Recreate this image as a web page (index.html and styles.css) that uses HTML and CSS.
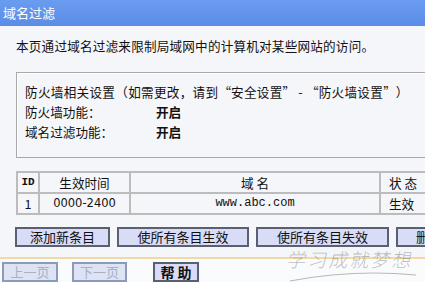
FILE: index.html
```html
<!DOCTYPE html>
<html>
<head>
<meta charset="utf-8">
<link rel="stylesheet" href="styles.css">
</head>
<body>
<div class="page">
  <div class="titlebar">域名过滤</div>
  <div class="intro">本页通过域名过滤来限制局域网中的计算机对某些网站的访问。</div>
  <div class="box">
    <div class="line wide">防火墙相关设置（如需更改，请到<span class="q">“</span>安全设置<span class="q">”</span> - <span class="q">“</span>防火墙设置<span class="q">”</span>）</div>
    <div class="line row"><span class="label">防火墙功能：</span><b class="val">开启</b></div>
    <div class="line row"><span class="label">域名过滤功能：</span><b class="val">开启</b></div>
  </div>
  <table class="list">
    <tr class="head">
      <td class="c-id mono">ID</td>
      <td class="c-time">生效时间</td>
      <td class="c-dom">域 名</td>
      <td class="c-st">状 态</td>
    </tr>
    <tr>
      <td class="c-id">1</td>
      <td class="c-time num">0000-2400</td>
      <td class="c-dom mono">www.abc.com</td>
      <td class="c-st">生效</td>
    </tr>
  </table>
  <div class="actions">
    <button class="btn w1">添加新条目</button>
    <button class="btn w2">使所有条目生效</button>
    <button class="btn w3">使所有条目失效</button>
    <button class="btn w4">删除所有条目</button>
  </div>
  <div class="footer">
    <button class="btn nav disabled">上一页</button>
    <button class="btn nav disabled">下一页</button>
    <button class="btn help">帮 助</button>
    <div class="mark">
      <span class="mark-text">学习成就梦想</span>
      <svg class="mark-curve" width="130" height="14" viewBox="0 0 130 14"><path d="M2 12 Q65 0 128 6" fill="none" stroke="#b8b8b8" stroke-width="1.2"/></svg>
    </div>
  </div>
</div>
</body>
</html>
```
FILE: styles.css
```css
html, body {
  margin: 0;
  padding: 0;
}
body {
  width: 425px;
  height: 282px;
  overflow: hidden;
  background: #f5f6f9;
  font-family: "Noto Sans CJK SC", "Noto Sans", sans-serif;
  font-size: 12.6px;
  color: #111;
}
.page {
  width: 425px;
  overflow: hidden;
}
.titlebar {
  height: 26px;
  line-height: 26px;
  background: linear-gradient(#6a9cf0, #5b8ce6);
  color: #fff;
  padding-left: 3px;
  font-size: 13px;
}
.intro {
  margin-top: 11px;
  padding-left: 16px;
  line-height: 18px;
  white-space: nowrap;
  letter-spacing: 0.2px;
}
.box {
  margin: 17px 0 0 16px;
  width: 430px;
  border: 1px solid #a8a8a8;
  border-right: none;
  box-shadow: inset 1px 1px 0 #fff;
  padding: 9px 0 15px 8px;
  box-sizing: border-box;
}
.line {
  line-height: 20px;
  white-space: nowrap;
}
.wide {
  letter-spacing: 0.3px;
}
.q {
  display: inline-block;
  width: 12.6px;
  text-align: center;
}
.row {
  display: flex;
}
.label {
  width: 131px;
}
.val {
  font-weight: bold;
}
.list {
  margin: 13px 0 0 16px;
  border-collapse: collapse;
  width: 430px;
  table-layout: fixed;
}
.list td {
  border: 2px solid #bcbcbc;
  height: 19px;
  padding: 0;
  text-align: center;
  white-space: nowrap;
  line-height: 19px;
}
.list .c-id { width: 20px; }
.list .c-time { width: 89px; }
.list .c-dom { width: 248px; }
.list .c-st { width: auto; text-align: left; padding-left: 8px; }
.mono {
  font-family: "Liberation Mono", "DejaVu Sans Mono", monospace;
  font-size: 12px;
}
.head .mono { font-weight: bold; font-size: 11px; }
.num {
  font-family: "DejaVu Sans", sans-serif;
  font-size: 11.5px;
}
.actions {
  display: flex;
  gap: 7px;
  margin: 12px 0 0 15px;
  width: 480px;
}
.btn {
  height: 20px;
  padding: 0;
  border: 2px solid #5a6070;
  background: #d9dcf6;
  font-family: "Noto Sans CJK SC", "Noto Sans", sans-serif;
  font-size: 13px;
  color: #111;
  line-height: 16px;
  box-sizing: border-box;
  flex: none;
}
.w1 { width: 95px; }
.w2 { width: 132px; }
.w3 { width: 133px; }
.w4 { width: 118px; }
.footer {
  position: relative;
  margin-top: 10px;
  border-top: 2px solid #f4d9a6;
  background: #fafbfd;
  height: 30px;
  display: flex;
  padding: 3px 0 0 2px;
  box-sizing: border-box;
}
.nav {
  width: 56px;
  margin-right: 14px;
  border-color: #8a9ab8;
  background: #dde3f3;
}
.nav + .nav { margin-right: 26px; width: 55px; }
.disabled { color: #a9b0c2; }
.help {
  width: 46px;
  font-weight: bold;
  font-size: 14px;
}
.mark {
  position: absolute;
  left: 288px;
  top: -12px;
  width: 130px;
  height: 36px;
}
.mark-text {
  display: block;
  font-family: "Noto Sans CJK SC", serif;
  font-weight: 300;
  font-size: 19px;
  letter-spacing: 2px;
  color: rgba(110, 110, 110, 0.45);
  line-height: 24px;
  transform: skewX(-12deg);
}
.mark-curve {
  display: block;
  margin-top: -2px;
}
```
